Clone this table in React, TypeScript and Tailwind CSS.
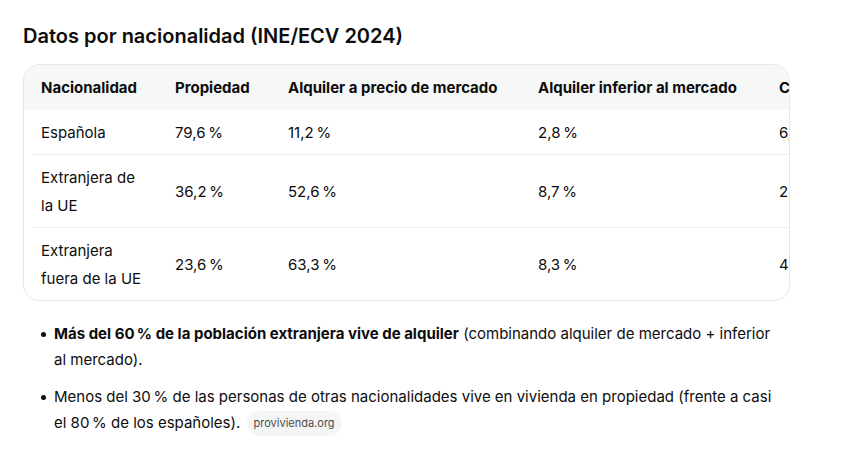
import React from 'react';

type Row = {
  nat: React.ReactNode;
  prop: string;
  market: string;
  below: string;
  free: string;
};

// narrow no-break space before the percent sign
const P = '\u202F%';

const rows: Row[] = [
  { nat: 'Española', prop: `79,6${P}`, market: `11,2${P}`, below: `2,8${P}`, free: `6,4${P}` },
  { nat: <>Extranjera de<br />la UE</>, prop: `36,2${P}`, market: `52,6${P}`, below: `8,7${P}`, free: `2,5${P}` },
  { nat: <>Extranjera<br />fuera de la UE</>, prop: `23,6${P}`, market: `63,3${P}`, below: `8,3${P}`, free: `4,8${P}` },
];

const Cells: React.FC<{ cells: React.ReactNode[] }> = ({ cells }) => (
  <>
    <div className="w-[134px] shrink-0">{cells[0]}</div>
    <div className="w-[113px] shrink-0">{cells[1]}</div>
    <div className="w-[250px] shrink-0">{cells[2]}</div>
    <div className="w-[241px] shrink-0">{cells[3]}</div>
    <div className="w-[160px] shrink-0 whitespace-nowrap">{cells[4]}</div>
  </>
);

const Dot = () => (
  <span className="flex h-[26px] w-[31px] shrink-0 items-center pl-[18px]">
    <span className="h-[5px] w-[5px] rounded-full bg-[#0d0d0d]" />
  </span>
);

const App: React.FC = () => {
  return (
    <div
      className="min-h-screen bg-white pt-[22px] pl-[23px] text-[#0d0d0d]"
      style={{ fontFamily: 'Inter, "Noto Sans", "Liberation Sans", sans-serif' }}
    >
      <h3 className="text-[20px] leading-7 font-semibold">
        Datos por nacionalidad (INE/ECV 2024)
      </h3>

      {/* Table card */}
      <div className="mt-[14px] w-[767px] overflow-hidden rounded-2xl border border-[#e5e8e8] text-[15px] leading-7">
        <div className="flex h-[45px] items-center bg-[#f6f7f7] pl-[17px] pt-[1px] font-bold whitespace-nowrap">
          <Cells
            cells={[
              'Nacionalidad',
              'Propiedad',
              'Alquiler a precio de mercado',
              'Alquiler inferior al mercado',
              'Cesión gratuita',
            ]}
          />
        </div>
        {rows.map((r, i) => (
          <div
            key={i}
            className={`ml-2 flex items-center pt-[9px] pb-[7px] pl-[9px] ${
              i < rows.length - 1 ? 'border-b border-[#eceeee]' : ''
            }`}
          >
            <Cells cells={[r.nat, r.prop, r.market, r.below, r.free]} />
          </div>
        ))}
      </div>

      {/* Notes */}
      <ul className="mt-[20px] w-[760px] space-y-[11px] text-[15px] leading-[26px]">
        <li className="flex">
          <Dot />
          <span>
            <strong className="font-bold">Más del 60{P} de la población extranjera vive de alquiler</strong>{' '}
            (combinando alquiler de mercado + inferior al mercado).
          </span>
        </li>
        <li className="flex">
          <Dot />
          <span>
            Menos del 30{P} de las personas de otras nacionalidades vive en vivienda en propiedad (frente a casi el
            80{P} de los españoles).{' '}
            <span className="ml-[2px] inline-flex h-[25px] items-center rounded-full bg-[#f4f5f5] px-[7px] align-middle text-[11px] leading-none text-[#4d4d4d]">
              provivienda.org
            </span>
          </span>
        </li>
      </ul>
    </div>
  );
};

export default App;
